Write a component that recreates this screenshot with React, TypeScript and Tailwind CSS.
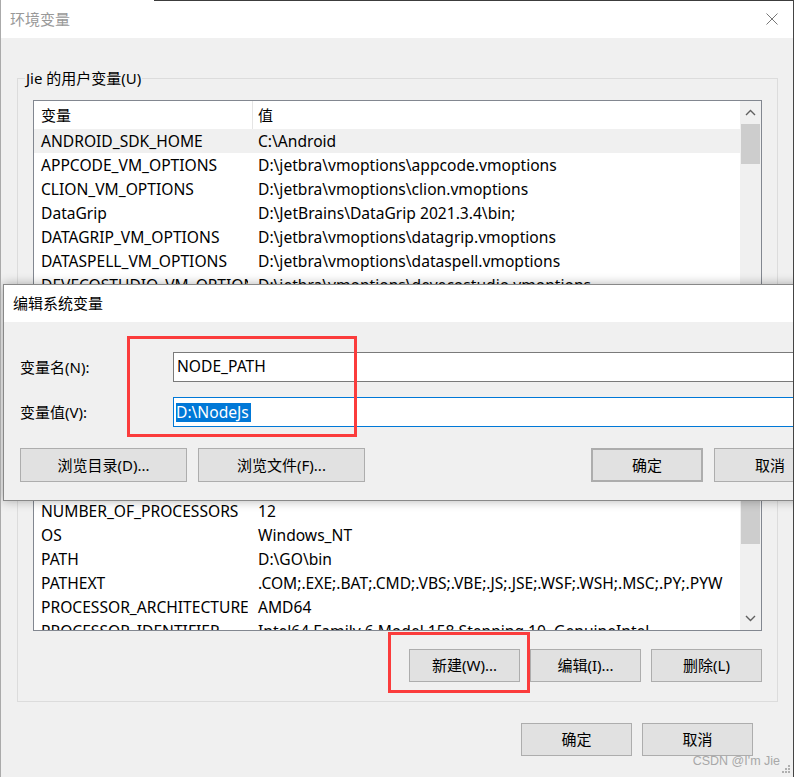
import React from 'react';

type Row = [string, string];

const userVars: Row[] = [
  ['ANDROID_SDK_HOME', 'C:\\Android'],
  ['APPCODE_VM_OPTIONS', 'D:\\jetbra\\vmoptions\\appcode.vmoptions'],
  ['CLION_VM_OPTIONS', 'D:\\jetbra\\vmoptions\\clion.vmoptions'],
  ['DataGrip', 'D:\\JetBrains\\DataGrip 2021.3.4\\bin;'],
  ['DATAGRIP_VM_OPTIONS', 'D:\\jetbra\\vmoptions\\datagrip.vmoptions'],
  ['DATASPELL_VM_OPTIONS', 'D:\\jetbra\\vmoptions\\dataspell.vmoptions'],
  ['DEVECOSTUDIO_VM_OPTIONS', 'D:\\jetbra\\vmoptions\\devecostudio.vmoptions'],
  ['GATEWAY_VM_OPTIONS', 'D:\\jetbra\\vmoptions\\gateway.vmoptions'],
];

const sysVars: Row[] = [
  ['ComSpec', 'C:\\Windows\\system32\\cmd.exe'],
  ['DriverData', 'C:\\Windows\\System32\\Drivers\\DriverData'],
  ['JAVA_HOME', 'D:\\Java\\jdk1.8.0_301'],
  ['NODE_PATH', 'D:\\NodeJs'],
  ['NUMBER_OF_PROCESSORS', '12'],
  ['OS', 'Windows_NT'],
  ['PATH', 'D:\\GO\\bin'],
  ['PATHEXT', '.COM;.EXE;.BAT;.CMD;.VBS;.VBE;.JS;.JSE;.WSF;.WSH;.MSC;.PY;.PYW'],
  ['PROCESSOR_ARCHITECTURE', 'AMD64'],
  ['PROCESSOR_IDENTIFIER', 'Intel64 Family 6 Model 158 Stepping 10, GenuineIntel'],
];

function Chevron({ up }: { up?: boolean }) {
  return (
    <svg width="11" height="7" viewBox="0 0 11 7">
      <polyline
        points={up ? '1,6 5.5,1.5 10,6' : '1,1 5.5,5.5 10,1'}
        fill="none"
        stroke="#606060"
        strokeWidth="1.4"
      />
    </svg>
  );
}

function Btn({ children, className = '' }: { children: React.ReactNode; className?: string }) {
  return (
    <div
      className={`flex h-[33px] items-center justify-center border border-[#adadad] bg-[#e1e1e1] text-[15px] text-black ${className}`}
    >
      {children}
    </div>
  );
}

function VarTable({ rows, selected, tableClass, spacerClass, thumbClass }: {
  rows: Row[];
  selected?: number;
  tableClass: string;
  spacerClass: string;
  thumbClass: string;
}) {
  return (
    <div className={`flex border border-[#828790] bg-white ${tableClass}`}>
      <div className="min-w-0 flex-1 overflow-hidden">
        <div className="flex h-[28px] items-center">
          <div className="h-full w-[219px] border-r border-[#e5e5e5] pl-[7px] leading-[28px]">变量</div>
          <div className="pl-[5px]">值</div>
        </div>
        {rows.map(([k, v], i) => (
          <div
            key={k}
            className={`flex h-[24px] items-center pt-[2px] text-[15.6px] ${i === selected ? 'bg-[#f0f0f0]' : ''}`}
          >
            <div className="w-[214px] shrink-0 overflow-hidden whitespace-nowrap pl-[7px]">{k}</div>
            <div className="whitespace-nowrap pl-[10px]">{v}</div>
          </div>
        ))}
      </div>
      <div className="flex w-[21px] shrink-0 flex-col bg-[#f0f0f0]">
        <div className="flex h-[23px] items-center justify-center">
          <Chevron up />
        </div>
        <div className={spacerClass} />
        <div className={`mx-px bg-[#cdcdcd] ${thumbClass}`} />
        <div className="flex-1" />
        <div className="flex h-[23px] items-center justify-center">
          <Chevron />
        </div>
      </div>
    </div>
  );
}

export default function App() {
  return (
    <div className="relative h-[777px] w-[794px] overflow-hidden border-l border-r border-l-[#aaaaaa] border-r-[#444444] bg-[#f0f0f0] font-['Noto_Sans','Noto_Sans_CJK_SC',sans-serif] text-[15px] text-black">
      <div className="absolute left-[153px] right-0 top-0 h-px bg-[#3c3c3c]" />

      {/* title bar */}
      <div className="flex h-[38px] items-center justify-between bg-white pl-[9px] pr-[15px]">
        <span className="text-[#999999]">环境变量</span>
        <svg width="12" height="12" viewBox="0 0 12 12">
          <path d="M0.5 0.5 L11.5 11.5 M11.5 0.5 L0.5 11.5" stroke="#777777" strokeWidth="1" />
        </svg>
      </div>

      {/* user variables */}
      <div className="ml-[16px] mt-[40px] w-[761px] border border-[#dcdcdc] px-[15px] pb-[37px]">
        <div className="-ml-[8px] -mt-[11px] h-[20px] w-fit bg-[#f0f0f0] px-px leading-[20px]">Jie 的用户变量(U)</div>
        <div className="mt-[12px]">
          <VarTable
            rows={userVars}
            selected={0}
            tableClass="h-[201px]"
            spacerClass="h-0"
            thumbClass="h-[40px]"
          />
        </div>
      </div>

      {/* system variables */}
      <div className="ml-[16px] mt-[13px] w-[761px] border border-[#dcdcdc] px-[15px] pb-[19px]">
        <div className="-ml-[8px] -mt-[11px] h-[20px] w-fit bg-[#f0f0f0] px-px leading-[20px]">系统变量(S)</div>
        <div className="mt-[12px]">
          <VarTable
            rows={sysVars}
            tableClass="h-[257px]"
            spacerClass="h-[72px]"
            thumbClass="h-[74px]"
          />
        </div>
        <div className="mt-[18px] flex justify-end gap-[10px]">
          <Btn className="w-[111px]">新建(W)...</Btn>
          <Btn className="w-[111px]">编辑(I)...</Btn>
          <Btn className="w-[111px]">删除(L)</Btn>
        </div>
      </div>

      <div className="mr-[40px] mt-[21px] flex justify-end gap-[10px]">
        <Btn className="w-[111px]">确定</Btn>
        <Btn className="w-[111px]">取消</Btn>
      </div>

      {/* edit dialog on top */}
      <div className="absolute left-[2px] top-[284px] h-[217px] w-[830px] border border-[#888888] bg-[#f0f0f0] shadow-[0_0_10px_rgba(0,0,0,0.3)]">
        <div className="flex h-[37px] items-center bg-white pl-[9px]">编辑系统变量</div>
        <div className="pl-[16px] pt-[30px]">
          <div className="flex h-[30px] items-center">
            <div className="w-[153px]">变量名(N):</div>
            <div className="flex h-full flex-1 items-center border border-[#7a7a7a] bg-white pl-[3px] text-[15.6px]">NODE_PATH</div>
          </div>
          <div className="mt-[15px] flex h-[30px] items-center">
            <div className="w-[153px]">变量值(V):</div>
            <div className="flex h-full flex-1 items-center border border-[#0078d7] bg-white pl-[2px] text-[15.6px]">
              <span className="bg-[#0078d7] pr-[2px] leading-[19px] text-white">D:\NodeJs</span>
            </div>
          </div>
          <div className="mt-[21px] flex">
            <Btn className="h-[34px] w-[167px]">浏览目录(D)...</Btn>
            <Btn className="ml-[11px] h-[34px] w-[167px]">浏览文件(F)...</Btn>
            <Btn className="ml-[226px] h-[34px] w-[112px] border-2 border-[#0078d7]">确定</Btn>
            <Btn className="ml-[11px] h-[34px] w-[112px]">取消</Btn>
          </div>
        </div>
      </div>

      {/* annotation boxes */}
      <div className="absolute left-[126px] top-[336px] h-[101px] w-[230px] border-[3px] border-[#fb3c3c]" />
      <div className="absolute left-[387px] top-[632px] h-[61px] w-[142px] border-[3px] border-[#fb3c3c]" />

      {/* watermark + grip */}
      <div className="absolute bottom-[6px] right-[13px] font-['Liberation_Sans',sans-serif] text-[12.5px] text-[#a8a8a8]">CSDN @I'm Jie</div>
      <svg className="absolute bottom-[3px] right-[2px]" width="10" height="10" viewBox="0 0 10 10">
        <rect x="7" y="1" width="2" height="2" fill="#b0b0b0" />
        <rect x="4" y="4" width="2" height="2" fill="#b0b0b0" />
        <rect x="7" y="4" width="2" height="2" fill="#b0b0b0" />
        <rect x="1" y="7" width="2" height="2" fill="#b0b0b0" />
        <rect x="4" y="7" width="2" height="2" fill="#b0b0b0" />
        <rect x="7" y="7" width="2" height="2" fill="#b0b0b0" />
      </svg>
    </div>
  );
}
